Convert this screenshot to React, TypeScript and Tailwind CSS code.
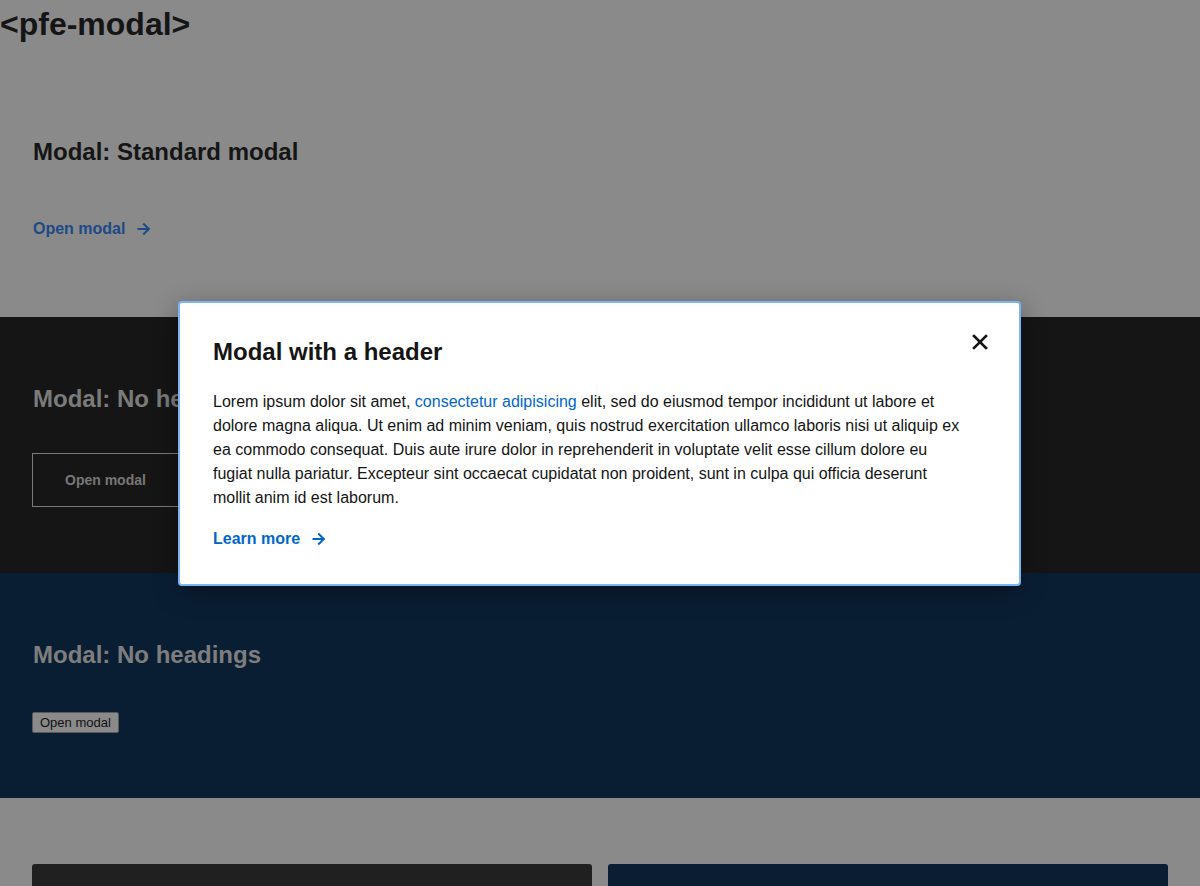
import React from "react";

function Arrow({ className }: { className?: string }) {
  return (
    <svg
      width="14"
      height="14"
      viewBox="0 0 14 14"
      fill="none"
      stroke="currentColor"
      strokeWidth="2"
      strokeLinecap="square"
      className={className}
    >
      <path d="M1.5 7h10" />
      <path d="M7 2.2l4.8 4.8L7 11.8" />
    </svg>
  );
}

function Modal() {
  return (
    <div className="absolute left-[178px] top-[301px] w-[843px] rounded-[4px] border-2 border-[#7cb5f3] bg-white pt-[34px] pb-[33px] px-[33px] shadow-[0_6px_24px_rgba(0,0,0,0.35)]">
      {/* Header */}
      <div className="flex items-start justify-between">
        <h2 className="text-[24px] leading-[30px] font-bold text-[#151515]">
          Modal with a header
        </h2>
        <button className="mt-[-3px] mr-[-2px] text-[#151515]" title="Close">
          <svg width="16" height="16" viewBox="0 0 16 16" stroke="currentColor" strokeWidth="2.6" strokeLinecap="square">
            <path d="M2 2l12 12M14 2L2 14" />
          </svg>
        </button>
      </div>

      {/* Body */}
      <p className="mt-[23px] max-w-[750px] text-[16px] leading-[24px] text-[#151515]">
        Lorem ipsum dolor sit amet,{" "}
        <a className="text-[#0066cc]">consectetur adipisicing</a> elit, sed do
        eiusmod tempor incididunt ut labore et dolore magna aliqua. Ut enim ad
        minim veniam, quis nostrud exercitation ullamco laboris nisi ut aliquip
        ex ea commodo consequat. Duis aute irure dolor in reprehenderit in
        voluptate velit esse cillum dolore eu fugiat nulla pariatur. Excepteur
        sint occaecat cupidatat non proident, sunt in culpa qui officia deserunt
        mollit anim id est laborum.
      </p>

      <a className="mt-[17px] flex items-center gap-[12px] text-[16px] leading-[24px] font-bold text-[#0066cc]">
        <span>Learn more</span>
        <Arrow />
      </a>
    </div>
  );
}

export default function App() {
  return (
    <div className="relative min-h-[886px] bg-[#8a8a8a] font-['Liberation_Sans',Arial,sans-serif]">
      {/* Standard */}
      <div className="h-[317px]">
        <h1 className="pt-[6px] text-[32px] leading-[37px] font-bold text-[#151515]">
          &lt;pfe-modal&gt;
        </h1>
        <section className="px-[33px] pt-[94px]">
          <h2 className="text-[24px] leading-[30px] font-bold text-[#151515]">
            Modal: Standard modal
          </h2>
          <a className="mt-[50px] flex items-center gap-[12px] text-[16px] leading-[24px] font-bold text-[#1d4a86]">
            <span>Open modal</span>
            <Arrow />
          </a>
        </section>
      </div>

      {/* Dark */}
      <section className="h-[256px] bg-[#151515] px-[32px] pt-[67px]">
        <h2 className="pl-px text-[24px] leading-[30px] font-bold text-[#7b7b7b]">
          Modal: No headings
        </h2>
        <button className="mt-[39px] h-[54px] border border-[#7a7a7a] px-[32px] text-[14px] font-bold text-[#777777]">
          Open modal
        </button>
      </section>

      {/* Navy */}
      <section className="h-[225px] bg-[#0a1e33] px-[32px] pt-[67px]">
        <h2 className="pl-px text-[24px] leading-[30px] font-bold text-[#7e7e7e]">
          Modal: No headings
        </h2>
        <button className="mt-[42px] h-[21px] rounded-[2px] border border-[#5a5a5a] bg-[#8a8a8a] px-[7px] text-[13px] leading-none text-[#111111]">
          Open modal
        </button>
      </section>

      {/* Cards */}
      <section className="grid grid-cols-2 gap-[16px] px-[32px] pt-[66px] pb-[32px]">
        <div className="h-[200px] rounded-[3px] bg-[#202020]" />
        <div className="h-[200px] rounded-[3px] bg-[#0a1d33]" />
      </section>

      <Modal />
    </div>
  );
}
